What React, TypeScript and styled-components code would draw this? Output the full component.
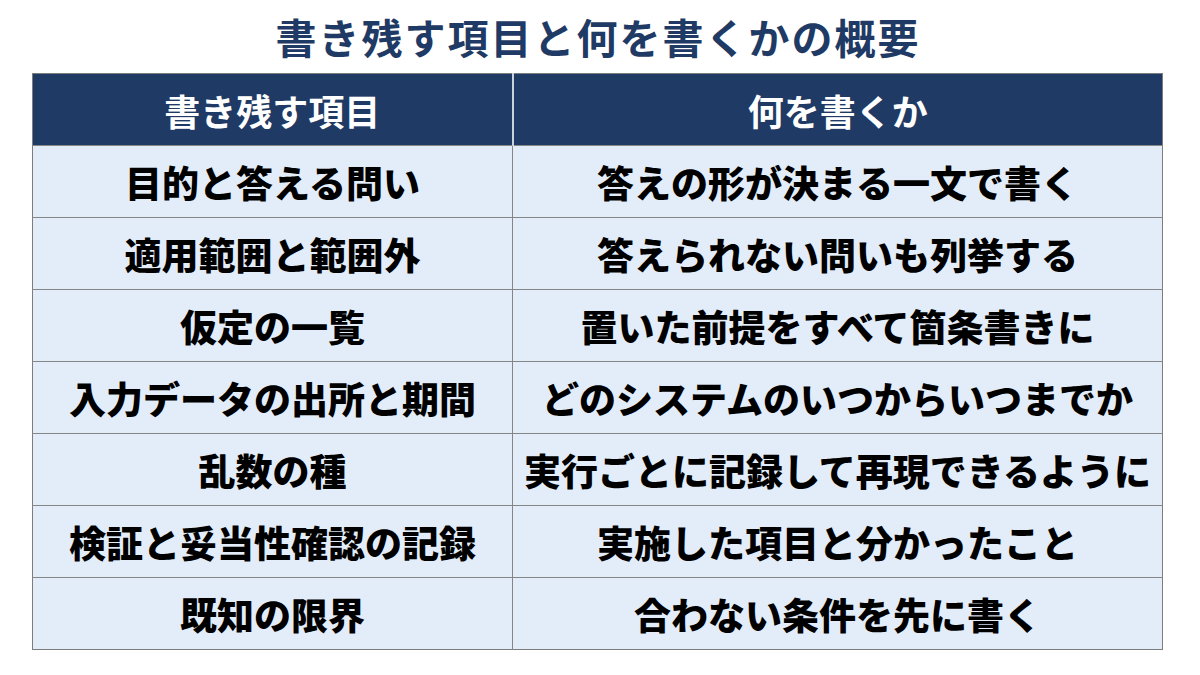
import React from 'react';
import styled, {createGlobalStyle} from 'styled-components';

const GlobalStyle = createGlobalStyle`
  html, body {
    margin: 0;
    padding: 0;
    background: #ffffff;
  }
  body {
    font-family: "Noto Sans CJK JP", "Noto Sans", sans-serif;
  }
`;

const Page = styled.div`
  width: 1200px;
  height: 675px;
  box-sizing: border-box;
  padding: 12px 36px 0 32px;
  display: flex;
  flex-direction: column;
  align-items: stretch;
`;

const Title = styled.h1`
  margin: 0 0 13px;
  text-align: center;
  font-size: 41px;
  line-height: 48px;
  font-weight: 700;
  letter-spacing: 2px;
  color: #1f3a64;
`;

const Table = styled.table`
  width: 1131px;
  border-collapse: collapse;
  table-layout: fixed;
  border: 1.5px solid #7d7d7d;
`;

const HeadCell = styled.th`
  height: 71px;
  padding: 0;
  background: #1f3a64;
  color: #ffffff;
  font-size: 36px;
  font-weight: 700;
  text-align: center;
  vertical-align: middle;
  & + & {
    border-left: 2px solid #c9d1dc;
  }
`;

const Row = styled.tr`
  background: #e3edf9;
  border-top: 1.5px solid #868686;
`;

const Cell = styled.td`
  height: 71px;
  padding: 0;
  color: #000000;
  font-size: 37px;
  font-weight: 800;
  text-align: center;
  vertical-align: middle;
  white-space: nowrap;
  & + & {
    border-left: 1.5px solid #868686;
  }
`;

type Entry = {
    item: string;
    what: string;
}

const entries: Entry[] = [
    {item: '目的と答える問い', what: '答えの形が決まる一文で書く'},
    {item: '適用範囲と範囲外', what: '答えられない問いも列挙する'},
    {item: '仮定の一覧', what: '置いた前提をすべて箇条書きに'},
    {item: '入力データの出所と期間', what: 'どのシステムのいつからいつまでか'},
    {item: '乱数の種', what: '実行ごとに記録して再現できるように'},
    {item: '検証と妥当性確認の記録', what: '実施した項目と分かったこと'},
    {item: '既知の限界', what: '合わない条件を先に書く'},
];

function App() {
  return (
    <>
      <GlobalStyle/>
      <Page>
        <Title>書き残す項目と何を書くかの概要</Title>
        <Table>
          <colgroup>
            <col style={{width: 480}}/>
            <col/>
          </colgroup>
          <thead>
            <tr>
              <HeadCell>書き残す項目</HeadCell>
              <HeadCell>何を書くか</HeadCell>
            </tr>
          </thead>
          <tbody>
            {entries.map(entry =>
              <Row key={entry.item}>
                <Cell>{entry.item}</Cell>
                <Cell>{entry.what}</Cell>
              </Row>
            )}
          </tbody>
        </Table>
      </Page>
    </>
  );
}

export default App;
